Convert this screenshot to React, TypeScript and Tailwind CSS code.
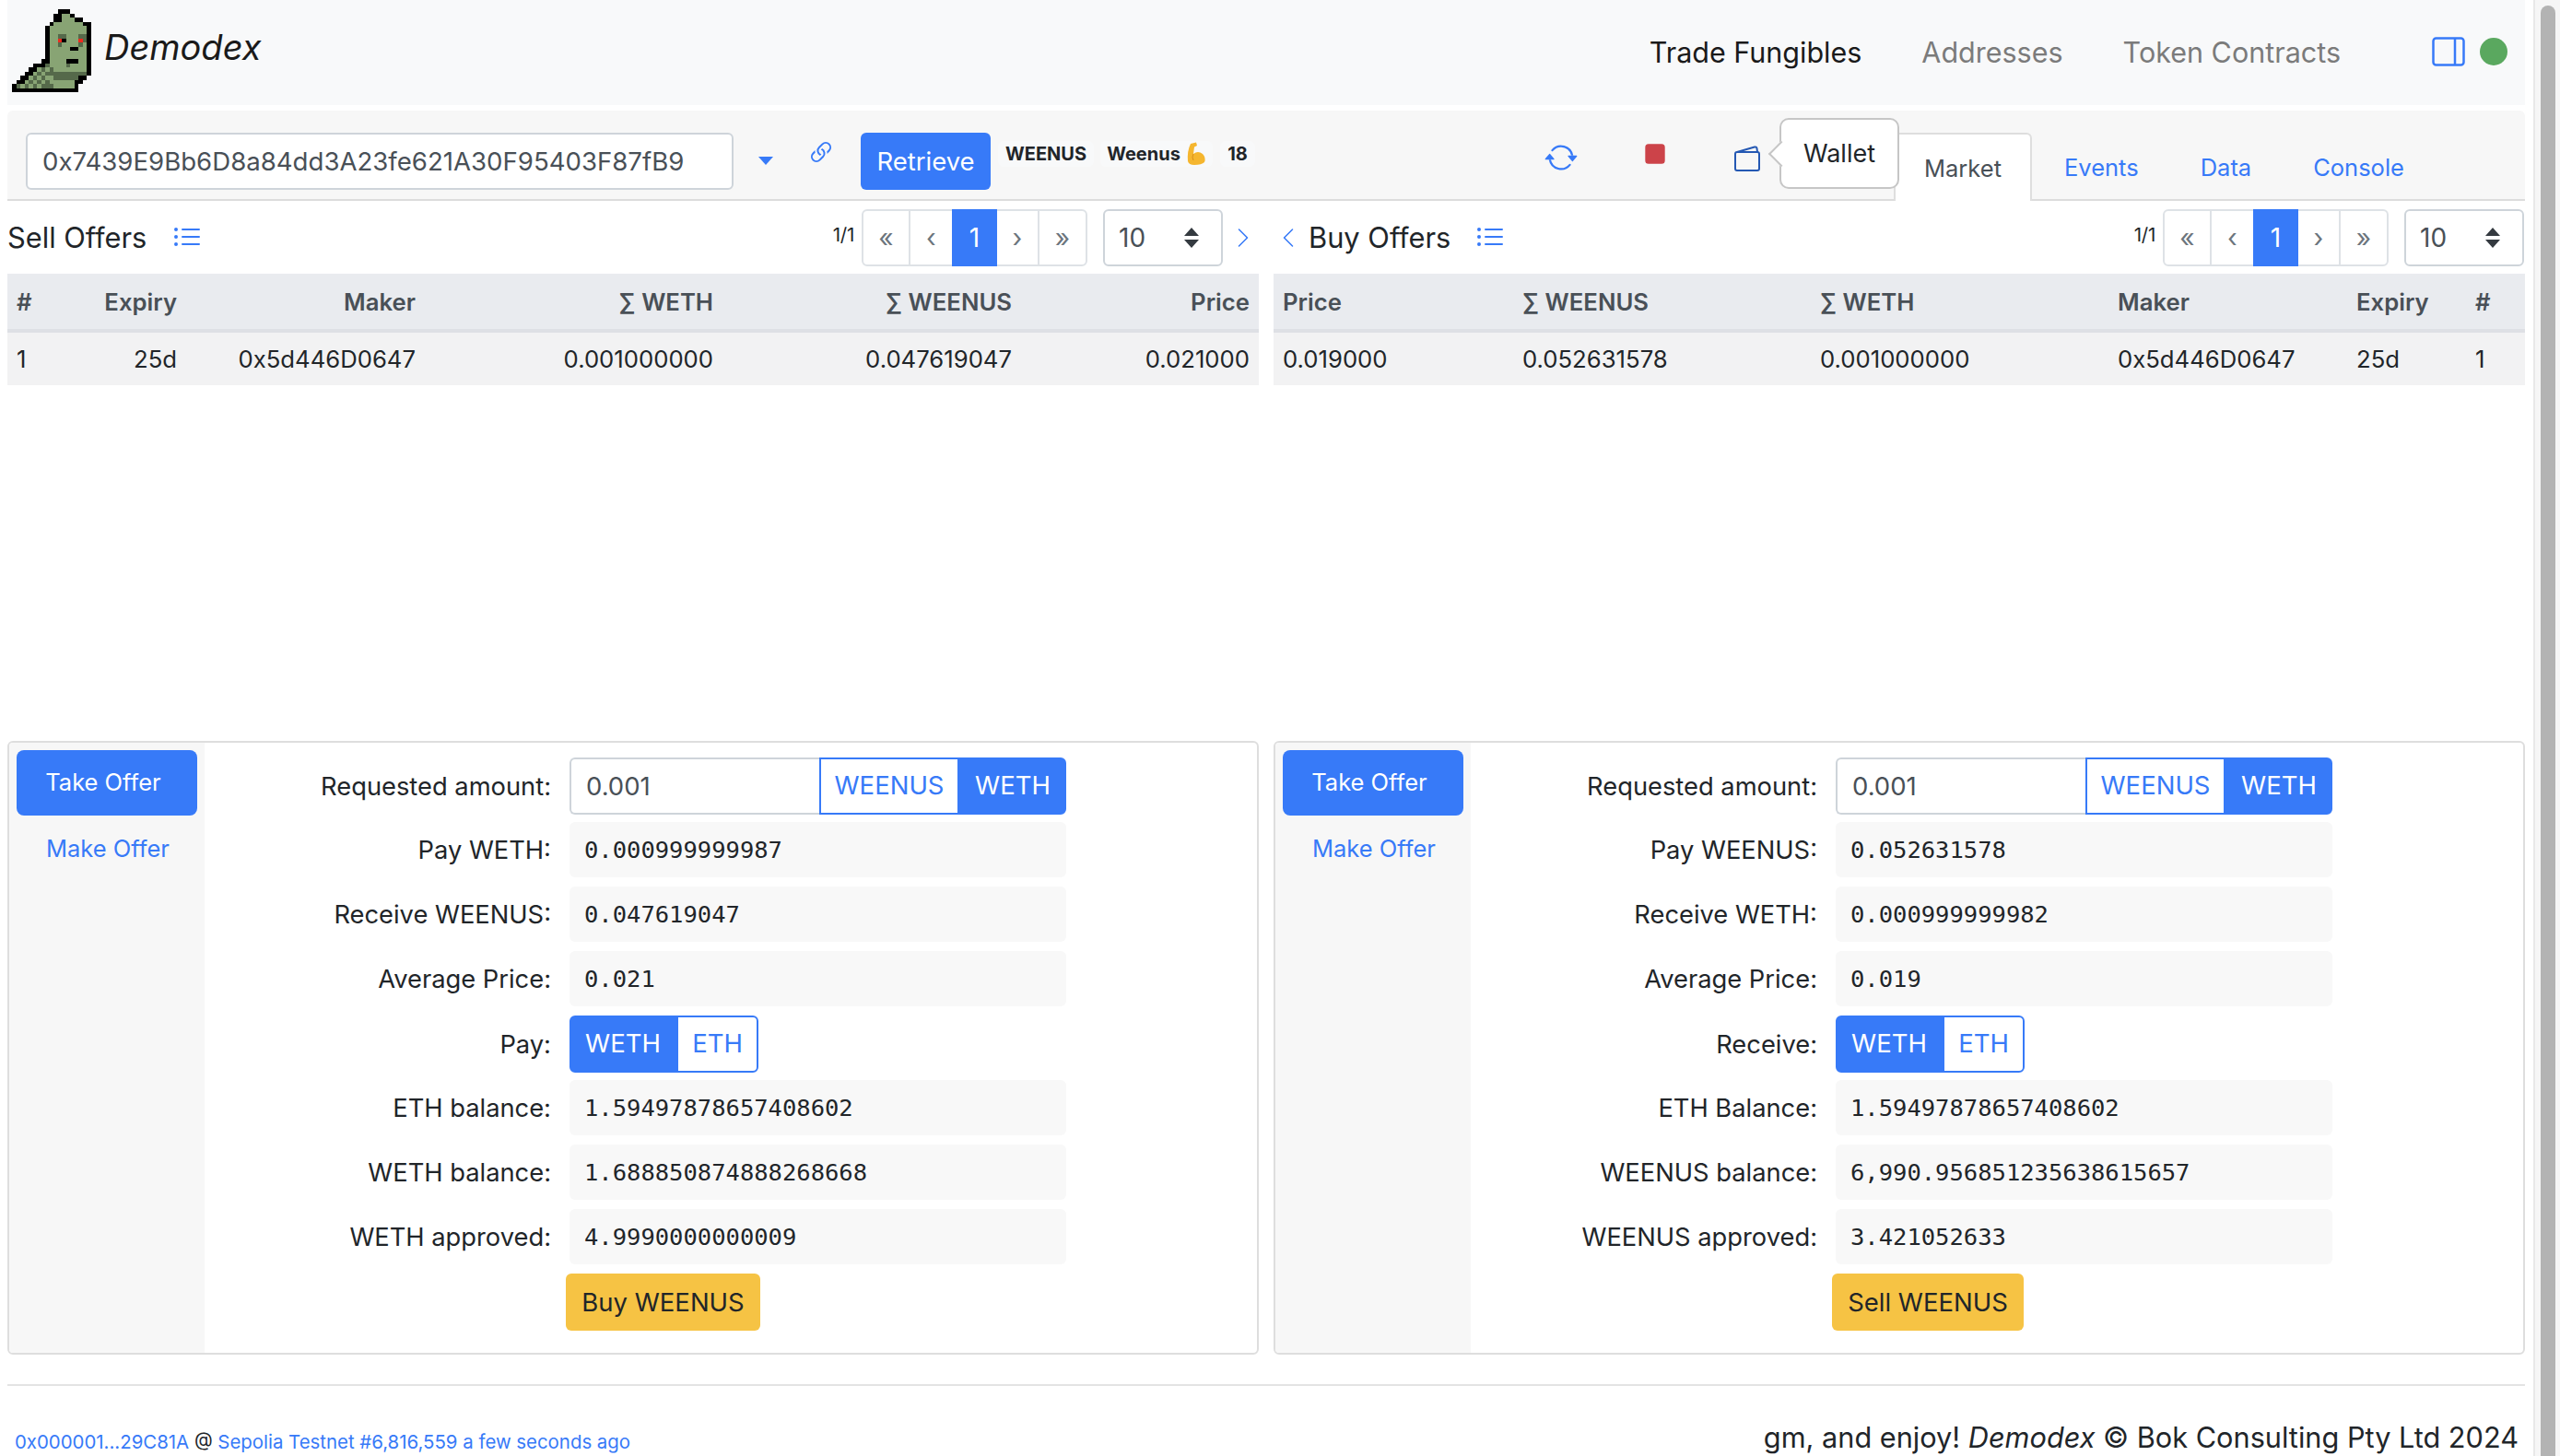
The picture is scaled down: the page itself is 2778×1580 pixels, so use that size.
import { BsArrowRepeat, BsChevronLeft, BsChevronRight, BsLink45Deg, BsListUl, BsStopFill } from "react-icons/bs";

const LOGO = [
  "...........kkk.....",
  "..........kkggk....",
  "..........kkgggkk..",
  ".........kgggggggkk",
  "........kgggggggggk",
  "........kgggggggggk",
  "........kggddgggddk",
  "........kggrkgggrdk",
  "........kggdggggdgk",
  "........kgggggkkggk",
  "........kgggggggggk",
  "........kgggggggggk",
  ".......kkggggkkkggk",
  ".....kkkdggggdggggk",
  "....kkgdgdggggggggk",
  "...kkgdgddddddddddk",
  "..kkgdgdggddddddkk.",
  ".kkgdgdgdggggggkk..",
  "kdgdgdgdddgggggk...",
  "kkkkkkkkkkkkkkkk...",
];

const LOGO_COLORS: Record<string, string> = { k: "#000000", g: "#88a474", d: "#55694a", r: "#f0291c" };

const Logo = () => (
  <svg width="86" height="90" viewBox="0 0 19 20" shapeRendering="crispEdges" className="shrink-0">
    {LOGO.flatMap((row, y) =>
      row.split("").map((c, x) => (c === "." ? null : <rect key={`${x}-${y}`} x={x} y={y} width="1" height="1" fill={LOGO_COLORS[c]} />))
    )}
  </svg>
);

const Pagination = () => (
  <div className="flex h-[62px] items-stretch rounded-[6px] border-2 border-[#dee2e6] text-[28px] text-[#6c757d]">
    <div className="flex w-[51px] items-center justify-center border-r-2 border-[#dee2e6]">«</div>
    <div className="flex w-[45px] items-center justify-center">‹</div>
    <div className="-my-[2px] flex w-[49px] items-center justify-center bg-[#377af8] text-white">1</div>
    <div className="flex w-[46px] items-center justify-center border-r-2 border-[#dee2e6]">›</div>
    <div className="flex flex-1 items-center justify-center">»</div>
  </div>
);

const PageSelect = () => (
  <div className="flex h-[62px] w-[130px] items-center justify-between rounded-[6px] border-2 border-[#ced4da] pl-[15px] pr-[24px] text-[28px] text-[#495057]">
    <span>10</span>
    <svg width="16" height="22" viewBox="0 0 16 22">
      <path d="M8 0 L16 9 H0 Z M8 22 L16 13 H0 Z" fill="#343a40" />
    </svg>
  </div>
);

const Pager = () => (
  <div className="flex items-center">
    <span className="mr-[8px] -mt-[4px] text-[20.5px] tracking-[-0.3px] text-[#212529]">1/1</span>
    <div className="w-[245px]">
      <Pagination />
    </div>
    <div className="ml-[17px]">
      <PageSelect />
    </div>
  </div>
);

const Cell = ({ w, right, head, children }: { w: string; right?: boolean; head?: boolean; children: React.ReactNode }) => (
  <div className={`${w} ${right ? "pr-[8px] text-right" : "pl-[10px]"} ${head ? "font-semibold text-[#495057]" : "text-[#212529]"} shrink-0 pt-[2px]`}>{children}</div>
);

type Col = [string, string, boolean, string];

const SELL_COLS: Col[] = [
  ["w-[92px]", "#", false, "1"],
  ["w-[100px]", "Expiry", true, "25d"],
  ["w-[259px]", "Maker", true, "0x5d446D0647"],
  ["w-[323px]", "∑ WETH", true, "0.001000000"],
  ["w-[324px]", "∑ WEENUS", true, "0.047619047"],
  ["w-[258px]", "Price", true, "0.021000"],
];

const BUY_COLS: Col[] = [
  ["w-[260px]", "Price", false, "0.019000"],
  ["w-[323px]", "∑ WEENUS", false, "0.052631578"],
  ["w-[323px]", "∑ WETH", false, "0.001000000"],
  ["w-[259px]", "Maker", false, "0x5d446D0647"],
  ["w-[129px]", "Expiry", false, "25d"],
  ["w-[64px]", "#", false, "1"],
];

const OfferTable = ({ cols }: { cols: Col[] }) => (
  <div className="text-[25.7px]">
    <div className="flex h-[64px] items-center border-b-4 border-[#dee0e5] bg-[#e9ebef]">
      {cols.map((c) => (
        <Cell key={c[1]} w={c[0]} right={c[2]} head>
          {c[1]}
        </Cell>
      ))}
    </div>
    <div className="flex h-[57px] items-center bg-[#f2f2f3]">
      {cols.map((c) => (
        <Cell key={c[1]} w={c[0]} right={c[2]}>
          {c[3]}
        </Cell>
      ))}
    </div>
  </div>
);

const Seg = ({ on, w, children }: { on?: boolean; w: string; children: React.ReactNode }) => (
  <div
    className={`${w} flex h-[62px] items-center justify-center border-2 border-[#377af8] text-[27.5px] ${
      on ? "bg-[#377af8] text-white" : "bg-white text-[#377af8]"
    }`}
  >
    {children}
  </div>
);

const Row = ({ label, mb, children }: { label: string; mb?: string; children: React.ReactNode }) => (
  <div className={`flex items-center ${mb ?? "mb-[10px]"}`}>
    <div className="w-[376px] pt-[2px] text-right text-[27.3px] text-[#212529]">{label}</div>
    <div className="ml-[20px] w-[539px]">{children}</div>
  </div>
);

const Mono = ({ children }: { children: React.ReactNode }) => (
  <div className="flex h-[60px] items-center rounded-[6px] bg-[#f8f8f8] pl-[16px] font-['DejaVu_Sans_Mono',monospace] text-[25.5px] text-[#212529]">
    {children}
  </div>
);

type PanelData = {
  payLabel: string;
  pay: string;
  recvLabel: string;
  recv: string;
  price: string;
  toggle: string;
  ethLabel: string;
  balLabel: string;
  bal: string;
  apprLabel: string;
  appr: string;
  action: string;
  actionW: string;
};

const OfferPanel = ({ d }: { d: PanelData }) => (
  <div className="flex h-[666px] overflow-hidden rounded-[6px] border-2 border-[#dedede]">
    <div className="w-[212px] shrink-0 bg-[#f7f7f7] pl-[8px] pt-[8px] text-[25.5px]">
      <div className="flex h-[71px] w-[196px] items-center justify-center rounded-[8px] bg-[#377af8] pr-[8px] text-white">Take Offer</div>
      <div className="mt-[17px] pl-[32px] text-[#377af8]">Make Offer</div>
    </div>
    <div className="flex-1 pt-[16px]">
      <Row label="Requested amount:" mb="mb-[8px]">
        <div className="flex">
          <div className="flex h-[62px] w-[271px] items-center rounded-l-[6px] border-2 border-r-0 border-[#ced4da] pl-[16px] pt-[2px] text-[27.5px] text-[#495057]">0.001</div>
          <Seg w="w-[152px]">WEENUS</Seg>
          <Seg on w="w-[116px] rounded-r-[6px]">
            WETH
          </Seg>
        </div>
      </Row>
      <Row label={d.payLabel}>
        <Mono>{d.pay}</Mono>
      </Row>
      <Row label={d.recvLabel}>
        <Mono>{d.recv}</Mono>
      </Row>
      <Row label="Average Price:">
        <Mono>{d.price}</Mono>
      </Row>
      <Row label={d.toggle} mb="mb-[8px]">
        <div className="flex">
          <Seg on w="w-[116px] rounded-l-[6px]">
            WETH
          </Seg>
          <Seg w="w-[89px] rounded-r-[6px]">ETH</Seg>
        </div>
      </Row>
      <Row label={d.ethLabel}>
        <Mono>1.59497878657408602</Mono>
      </Row>
      <Row label={d.balLabel}>
        <Mono>{d.bal}</Mono>
      </Row>
      <Row label={d.apprLabel}>
        <Mono>{d.appr}</Mono>
      </Row>
      <div className="ml-[392px] flex">
        <div className={`${d.actionW} flex h-[62px] items-center justify-center rounded-[6px] bg-[#f6c344] pt-[1px] text-[27.5px] text-[#212529]`}>{d.action}</div>
      </div>
    </div>
  </div>
);

const WalletIcon = () => (
  <svg width="28" height="28" viewBox="0 0 28 28" fill="none" stroke="#2458b3" strokeWidth="2">
    <rect x="1" y="7" width="26" height="20" rx="2" />
    <path d="M3 7 L22 1.5 Q24 1 24.5 3 L25 7" />
  </svg>
);

const BicepIcon = () => (
  <svg width="22" height="26" viewBox="0 0 22 26">
    <path d="M5 2 L11 0.5 L12 4 L9 5.5 L8 13 Q13 9 18 13 Q22 17 20 22 Q17 25 9 25 Q3 25 2 21 Q1 10 5 2 Z" fill="#f5b62f" />
    <path d="M8 13 Q6 17 8 20" fill="none" stroke="#d8901a" strokeWidth="1" />
  </svg>
);

export default function App() {
  return (
    <div className="flex h-[1580px] w-[2778px] overflow-hidden bg-white font-['Inter','Noto_Sans',sans-serif] text-[#212529]">
      <div className="flex w-[2749px] shrink-0 flex-col pl-[8px] pr-[9px]">
        {/* navbar */}
        <div className="flex h-[114px] shrink-0 items-center bg-[#f8f9fa] pl-[5px] pr-[19px]">
          <div className="-mt-[4px]">
            <Logo />
          </div>
          <span className="ml-[14px] -mt-[11px] text-[38px] italic text-[#1a1a1a]">Demodex</span>
          <div className="ml-auto flex items-center text-[30.5px]">
            <span className="text-[#1a1a1a]">Trade Fungibles</span>
            <span className="ml-[65px] text-[#7b7b7b]">Addresses</span>
            <span className="ml-[65px] text-[#7b7b7b]">Token Contracts</span>
            <svg width="36" height="32" viewBox="0 0 36 32" fill="none" stroke="#377af8" strokeWidth="2.5" className="ml-[99px] -mt-[2px]">
              <rect x="1.5" y="1.5" width="33" height="29" rx="3" />
              <path d="M25 1.5 V30.5" />
            </svg>
            <div className="ml-[16px] -mt-[2px] h-[30px] w-[30px] rounded-full bg-[#5aa85f]" />
          </div>
        </div>

        {/* toolbar */}
        <div className="mt-[6px] flex h-[98px] shrink-0 rounded-t-[6px] border-b-2 border-[#dcdcdc] bg-[#f7f7f7]">
          <div className="ml-[20px] mt-[24px] flex h-[62px] w-[768px] items-center rounded-[6px] border-2 border-[#ced4da] bg-white pl-[16px] pt-[2px] text-[27.6px] text-[#495057]">
            0x7439E9Bb6D8a84dd3A23fe621A30F95403F87fB9
          </div>
          <svg width="16" height="9" viewBox="0 0 16 9" className="ml-[27px] mt-[50px]">
            <path d="M0 0 H16 L8 9 Z" fill="#377af8" />
          </svg>
          <BsLink45Deg className="ml-[36px] mt-[30px] text-[32px] text-[#377af8]" />
          <div className="ml-[27px] mt-[24px] flex h-[62px] w-[141px] items-center justify-center rounded-[6px] bg-[#377af8] pt-[2px] text-[27.5px] text-white">Retrieve</div>
          <div className="ml-[8px] mt-[33px] flex h-[28px] w-[104px] items-center justify-center rounded-[6px] bg-[#f8f9fa] text-[20px] font-bold">WEENUS</div>
          <div className="ml-[7px] mt-[33px] flex h-[28px] w-[122px] items-center justify-center gap-[6px] rounded-[6px] bg-[#f8f9fa] text-[20px] font-bold">
            Weenus <BicepIcon />
          </div>
          <div className="ml-[8px] mt-[33px] flex h-[28px] w-[38px] items-center justify-center rounded-[6px] bg-[#f8f9fa] text-[20px] font-bold">18</div>
          <BsArrowRepeat className="ml-[314px] mt-[33px] text-[36px] text-[#377af8]" />
          <BsStopFill className="ml-[65px] mt-[28px] text-[38px] text-[#cc4349]" />
          <div className="relative ml-[67px] mt-[38px] h-[28px] w-[28px]">
            <WalletIcon />
            <div className="absolute -top-[30px] left-[49px] z-10 flex h-[77px] w-[130px] items-center justify-center rounded-[10px] border-2 border-[#c6c6c6] bg-white pt-[2px] text-[27px] text-[#212529]">
              Wallet
              <div className="absolute -left-[10px] top-[27px] h-[20px] w-[20px] rotate-45 border-b-2 border-l-2 border-[#c6c6c6] bg-white" />
            </div>
          </div>
          <div className="ml-[145px] mt-[24px] -mb-[2px] flex h-[74px] w-[150px] items-center justify-center rounded-t-[6px] border-x-2 border-t-2 border-[#dedede] bg-white pt-[2px] text-[25.5px] text-[#495057]">Market</div>
          <div className="mt-[24px] flex h-[74px] items-center pt-[2px] text-[25.5px] text-[#377af8]">
            <span className="ml-[35px]">Events</span>
            <span className="ml-[67px]">Data</span>
            <span className="ml-[67px]">Console</span>
          </div>
        </div>

        {/* offer tables */}
        <div className="grid h-[586px] shrink-0 grid-cols-[1358px_1358px] gap-x-[16px]">
          <div>
            <div className="flex h-[79px] items-center">
              <span className="pt-[2px] text-[30.8px]">Sell Offers</span>
              <BsListUl className="ml-[28px] text-[32px] text-[#377af8]" />
              <div className="ml-auto">
                <Pager />
              </div>
              <BsChevronRight className="ml-[10px] mr-[5px] text-[24px] text-[#377af8]" />
            </div>
            <OfferTable cols={SELL_COLS} />
          </div>
          <div>
            <div className="flex h-[79px] items-center">
              <BsChevronLeft className="ml-[4px] text-[24px] text-[#377af8]" />
              <span className="ml-[10px] pt-[2px] text-[30.8px]">Buy Offers</span>
              <BsListUl className="ml-[27px] text-[32px] text-[#377af8]" />
              <div className="ml-auto mr-[1px]">
                <Pager />
              </div>
            </div>
            <OfferTable cols={BUY_COLS} />
          </div>
        </div>

        {/* take offer panels */}
        <div className="grid shrink-0 grid-cols-[1358px_1358px] gap-x-[16px]">
          <OfferPanel
            d={{
              payLabel: "Pay WETH:",
              pay: "0.000999999987",
              recvLabel: "Receive WEENUS:",
              recv: "0.047619047",
              price: "0.021",
              toggle: "Pay:",
              ethLabel: "ETH balance:",
              balLabel: "WETH balance:",
              bal: "1.688850874888268668",
              apprLabel: "WETH approved:",
              appr: "4.9990000000009",
              action: "Buy WEENUS",
              actionW: "w-[211px]",
            }}
          />
          <OfferPanel
            d={{
              payLabel: "Pay WEENUS:",
              pay: "0.052631578",
              recvLabel: "Receive WETH:",
              recv: "0.000999999982",
              price: "0.019",
              toggle: "Receive:",
              ethLabel: "ETH Balance:",
              balLabel: "WEENUS balance:",
              bal: "6,990.956851235638615657",
              apprLabel: "WEENUS approved:",
              appr: "3.421052633",
              action: "Sell WEENUS",
              actionW: "w-[208px]",
            }}
          />
        </div>

        {/* footer */}
        <div className="mt-[32px] h-[2px] shrink-0 bg-[#e3e3e3]" />
        <div className="flex flex-1 items-end pl-[8px] pr-[7px]">
          <span className="text-[20.4px] leading-[30px] text-[#377af8]">
            0x000001...29C81A <span className="text-[#212529]">@</span> Sepolia Testnet #6,816,559 a few seconds ago
          </span>
          <span className="ml-auto pb-[2px] text-[30.7px] leading-[36px]">
            gm, and enjoy! <i>Demodex</i> © Bok Consulting Pty Ltd 2024
          </span>
        </div>
      </div>

      {/* page scrollbar */}
      <div className="flex w-[29px] shrink-0 justify-center border-l-2 border-[#e8e8e8] bg-[#f6f6f6] pt-[6px]">
        <div className="h-[1574px] w-[16px] rounded-t-full bg-[#b3b3b3]" />
      </div>
    </div>
  );
}
